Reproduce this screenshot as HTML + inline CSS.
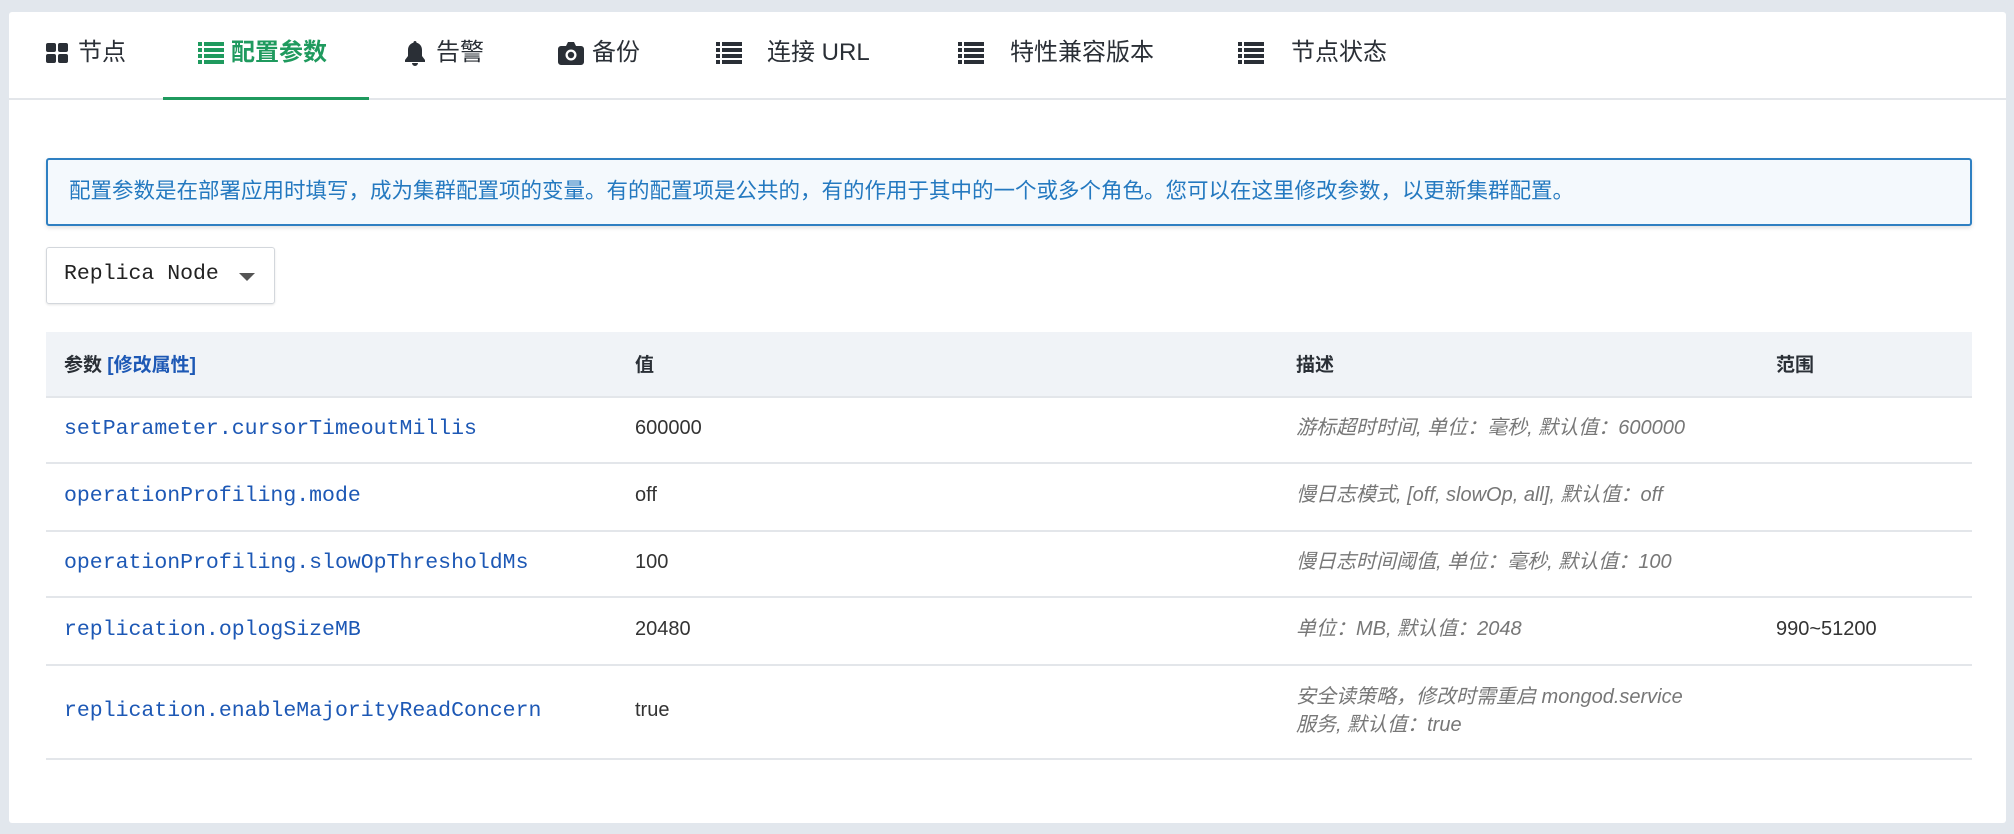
<!DOCTYPE html>
<html><head><meta charset="utf-8"><style>
*{margin:0;padding:0;box-sizing:border-box}
body{width:2014px;height:834px;background:#e2e7ed;font-family:"Liberation Sans","Noto Sans CJK SC",sans-serif;position:relative;overflow:hidden}
.card{position:absolute;left:9px;top:12px;width:1997px;height:811px;background:#fff;border-radius:3px}
.a{position:absolute;white-space:nowrap}
.tab{position:absolute;top:38px;font-size:24px;line-height:30px;color:#2a2f36}
.ic{position:absolute}
.mono{font-family:"Liberation Mono","DejaVu Sans Mono",monospace;font-size:21.5px;color:#1d58b5;letter-spacing:0}
.val{font-size:20px;color:#333}
.desc{font-size:20px;color:#777;font-style:italic;line-height:28px}
.hl{position:absolute;left:46px;width:1926px;height:2px;background:#e3e6ea}
</style></head><body>
<div class="card"></div>
<svg class="ic" style="left:46px;top:43px" width="22" height="20" viewBox="0 0 22 20"><rect x="0" y="0" width="10" height="9" rx="2" fill="#2a2f36"/><rect x="12" y="0" width="10" height="9" rx="2" fill="#2a2f36"/><rect x="0" y="11" width="10" height="9" rx="2" fill="#2a2f36"/><rect x="12" y="11" width="10" height="9" rx="2" fill="#2a2f36"/></svg>
<div class="tab" style="left:78px">节点</div>
<svg class="ic" style="left:198px;top:42px" width="26" height="22" viewBox="0 0 26 22" fill="#1f9a5e"><rect x="0" y="0" width="4" height="4"/><rect x="6" y="0" width="20" height="4"/><rect x="0" y="6" width="4" height="4"/><rect x="6" y="6" width="20" height="4"/><rect x="0" y="12" width="4" height="4"/><rect x="6" y="12" width="20" height="4"/><rect x="0" y="18" width="4" height="4"/><rect x="6" y="18" width="20" height="4"/></svg>
<div class="tab" style="left:231px;color:#1f9a5e;font-weight:bold">配置参数</div>
<div class="a" style="left:163px;top:97px;width:206px;height:3px;background:#1f9a5e;z-index:2"></div>
<div class="a" style="left:9px;top:98px;width:1997px;height:2px;background:#e3e6ea"></div>
<svg class="ic" style="left:404px;top:41px" width="22" height="26" viewBox="0 0 22 26" fill="#2a2f36"><path d="M11 0c1 0 1.6.8 1.6 1.8C16 2.6 18 5.5 18 9v6l3 4v2H1v-2l3-4V9c0-3.5 2-6.4 5.4-7.2C9.4.8 10 0 11 0zM8 22h6a3 3 0 0 1-6 0z"/></svg>
<div class="tab" style="left:436px">告警</div>
<svg class="ic" style="left:558px;top:41px" width="26" height="24" viewBox="0 0 26 24"><path d="M3 5h5l2-4h6l2 4h5a3 3 0 0 1 3 3v13a3 3 0 0 1-3 3H3a3 3 0 0 1-3-3V8a3 3 0 0 1 3-3z" fill="#2a2f36"/><circle cx="13" cy="14" r="5.5" fill="#fff"/><circle cx="13" cy="14" r="3.2" fill="#2a2f36"/></svg>
<div class="tab" style="left:592px">备份</div>
<svg class="ic" style="left:716px;top:42px" width="26" height="22" viewBox="0 0 26 22" fill="#2a2f36"><rect x="0" y="0" width="4" height="4"/><rect x="6" y="0" width="20" height="4"/><rect x="0" y="6" width="4" height="4"/><rect x="6" y="6" width="20" height="4"/><rect x="0" y="12" width="4" height="4"/><rect x="6" y="12" width="20" height="4"/><rect x="0" y="18" width="4" height="4"/><rect x="6" y="18" width="20" height="4"/></svg>
<div class="tab" style="left:767px">连接 URL</div>
<svg class="ic" style="left:958px;top:42px" width="26" height="22" viewBox="0 0 26 22" fill="#2a2f36"><rect x="0" y="0" width="4" height="4"/><rect x="6" y="0" width="20" height="4"/><rect x="0" y="6" width="4" height="4"/><rect x="6" y="6" width="20" height="4"/><rect x="0" y="12" width="4" height="4"/><rect x="6" y="12" width="20" height="4"/><rect x="0" y="18" width="4" height="4"/><rect x="6" y="18" width="20" height="4"/></svg>
<div class="tab" style="left:1010px">特性兼容版本</div>
<svg class="ic" style="left:1238px;top:42px" width="26" height="22" viewBox="0 0 26 22" fill="#2a2f36"><rect x="0" y="0" width="4" height="4"/><rect x="6" y="0" width="20" height="4"/><rect x="0" y="6" width="4" height="4"/><rect x="6" y="6" width="20" height="4"/><rect x="0" y="12" width="4" height="4"/><rect x="6" y="12" width="20" height="4"/><rect x="0" y="18" width="4" height="4"/><rect x="6" y="18" width="20" height="4"/></svg>
<div class="tab" style="left:1291px">节点状态</div>
<div class="a" style="left:46px;top:158px;width:1926px;height:68px;border:2px solid #2f80c2;border-radius:3px;background:#f4f9fd;box-shadow:0 2px 4px rgba(0,0,0,.12)"></div>
<div class="a" style="left:69px;top:177px;font-size:21.5px;line-height:28px;color:#2479c0">配置参数是在部署应用时填写，成为集群配置项的变量。有的配置项是公共的，有的作用于其中的一个或多个角色。您可以在这里修改参数，以更新集群配置。</div>
<div class="a" style="left:46px;top:247px;width:229px;height:57px;border:1px solid #d3d7dc;border-radius:3px;box-shadow:0 1px 2px rgba(0,0,0,.1)"></div>
<div class="a mono" style="left:64px;top:262px;color:#222">Replica Node</div>
<svg class="ic" style="left:239px;top:273px" width="16" height="9"><path d="M0 0h16L8 8z" fill="#555"/></svg>
<div class="a" style="left:46px;top:332px;width:1926px;height:65px;background:#f0f3f7"></div>
<div class="hl" style="top:396px"></div>
<div class="a" style="left:64px;top:350px;font-size:19px;font-weight:bold;color:#2a2f36">参数 <span style="color:#1d58b5">[修改属性]</span></div>
<div class="a" style="left:635px;top:350px;font-size:19px;font-weight:bold;color:#2a2f36">值</div>
<div class="a" style="left:1296px;top:350px;font-size:19px;font-weight:bold;color:#2a2f36">描述</div>
<div class="a" style="left:1776px;top:350px;font-size:19px;font-weight:bold;color:#2a2f36">范围</div>

<div class="a mono" style="left:64px;top:417px">setParameter.cursorTimeoutMillis</div>
<div class="a val" style="left:635px;top:417px">600000</div>
<div class="a desc" style="left:1296px;top:414px">游标超时时间, 单位：毫秒, 默认值：600000</div>
<div class="hl" style="top:462px"></div>

<div class="a mono" style="left:64px;top:484px">operationProfiling.mode</div>
<div class="a val" style="left:635px;top:484px">off</div>
<div class="a desc" style="left:1296px;top:481px">慢日志模式, [off, slowOp, all], 默认值：off</div>
<div class="hl" style="top:530px"></div>

<div class="a mono" style="left:64px;top:551px">operationProfiling.slowOpThresholdMs</div>
<div class="a val" style="left:635px;top:551px">100</div>
<div class="a desc" style="left:1296px;top:548px">慢日志时间阈值, 单位：毫秒, 默认值：100</div>
<div class="hl" style="top:596px"></div>

<div class="a mono" style="left:64px;top:618px">replication.oplogSizeMB</div>
<div class="a val" style="left:635px;top:618px">20480</div>
<div class="a desc" style="left:1296px;top:615px">单位：MB, 默认值：2048</div>
<div class="a val" style="left:1776px;top:618px">990~51200</div>
<div class="hl" style="top:664px"></div>

<div class="a mono" style="left:64px;top:699px">replication.enableMajorityReadConcern</div>
<div class="a val" style="left:635px;top:699px">true</div>
<div class="a desc" style="left:1296px;top:683px">安全读策略，修改时需重启 mongod.service<br>服务, 默认值：true</div>
<div class="hl" style="top:758px"></div>
</body></html>
